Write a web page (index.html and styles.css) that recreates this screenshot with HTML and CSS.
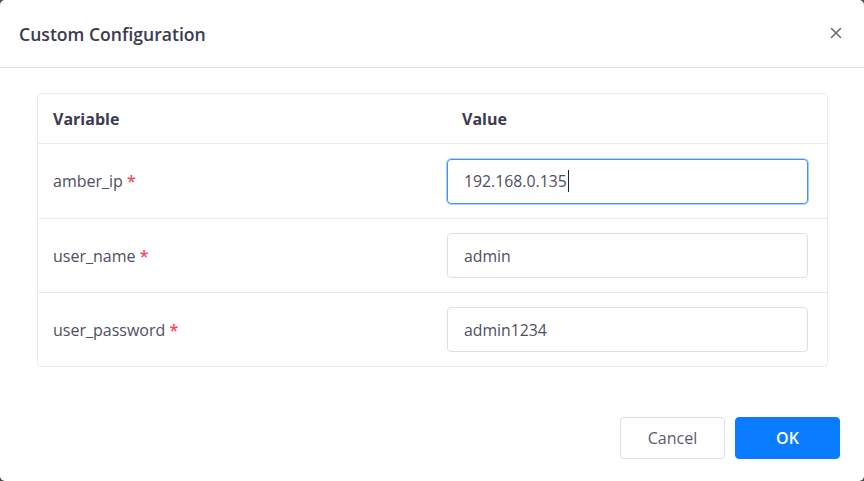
FILE: index.html
```html
<!DOCTYPE html>
<html>
<head>
<meta charset="utf-8">
<link rel="stylesheet" href="styles.css">
</head>
<body>
<div class="dialog">
  <div class="header">
    <span class="title">Custom Configuration</span>
    <span class="close">
      <svg width="12" height="12" viewBox="0 0 12 12"><path d="M1.5 1.5 L10.5 10.5 M10.5 1.5 L1.5 10.5" stroke="#6b6b7b" stroke-width="1.6" stroke-linecap="round"/></svg>
    </span>
  </div>
  <div class="body">
    <div class="table">
      <div class="row head">
        <div class="c1">Variable</div>
        <div class="c2">Value</div>
      </div>
      <div class="row first">
        <div class="c1">amber_ip <span class="req">*</span></div>
        <div class="c2"><div class="input focus">192.168.0.135<span class="caret"></span></div></div>
      </div>
      <div class="row">
        <div class="c1">user_name <span class="req">*</span></div>
        <div class="c2"><div class="input">admin</div></div>
      </div>
      <div class="row last">
        <div class="c1">user_password <span class="req">*</span></div>
        <div class="c2"><div class="input">admin1234</div></div>
      </div>
    </div>
  </div>
  <div class="footer">
    <button class="btn cancel">Cancel</button>
    <button class="btn ok">OK</button>
  </div>
</div>
</body>
</html>
```
FILE: styles.css
```css
html, body {
  margin: 0;
  padding: 0;
  background: #4a4a4a;
}
body {
  width: 864px;
  height: 481px;
  overflow: hidden;
  font-family: "Open Sans", "Noto Sans", sans-serif;
}
.dialog {
  width: 864px;
  height: 481px;
  background: #fff;
  border-radius: 5px;
  display: flex;
  flex-direction: column;
}
.header {
  height: 67px;
  border-bottom: 1px solid #dcdfe6;
  display: flex;
  align-items: center;
  justify-content: space-between;
  padding: 0 22px 0 19px;
  box-sizing: content-box;
}
.title {
  font-size: 17.6px;
  font-weight: 600;
  color: #3b3b50;
}
.close {
  display: flex;
  align-items: center;
  margin-top: -2px;
}
.body {
  padding: 25px 36px 0 37px;
}
.table {
  border: 1px solid #ebebeb;
  border-radius: 4px;
}
.row {
  display: flex;
  align-items: center;
  height: 73px;
  border-bottom: 1px solid #ebebeb;
  font-size: 16px;
  color: #4e4e62;
}
.row.first {
  height: 74px;
}
.row.last {
  border-bottom: none;
}
.row.head {
  height: 49px;
  font-weight: 700;
  color: #3b3b50;
}
.c1 {
  width: 409px;
  padding-left: 15px;
  box-sizing: border-box;
}
.c2 {
  flex: 1;
  padding-right: 19px;
}
.head .c2 {
  padding-left: 15px;
}
.req {
  color: #f5455c;
  font-weight: 600;
}
.input {
  height: 45px;
  border: 1px solid #dcdfe6;
  border-radius: 4px;
  box-sizing: border-box;
  display: flex;
  align-items: center;
  padding-left: 16px;
  font-size: 15.8px;
  color: #4e4e62;
}
.input.focus {
  border-color: #3f92ff;
  box-shadow: 0 0 0 0.6px #6aaaff;
}
.caret {
  display: inline-block;
  width: 1px;
  height: 22px;
  background: #222;
  margin-left: 1px;
}
.footer {
  display: flex;
  justify-content: flex-end;
  gap: 10px;
  padding: 50px 24px 0 0;
}
.btn {
  width: 105px;
  height: 42px;
  border-radius: 4px;
  font-family: "Open Sans", "Noto Sans", sans-serif;
  font-size: 16px;
  cursor: pointer;
}
.cancel {
  background: #fff;
  border: 1px solid #dcdfe6;
  color: #5a5a6e;
}
.ok {
  background: #0a7cff;
  border: 1px solid #0a7cff;
  color: #fff;
  font-weight: 600;
}
```
